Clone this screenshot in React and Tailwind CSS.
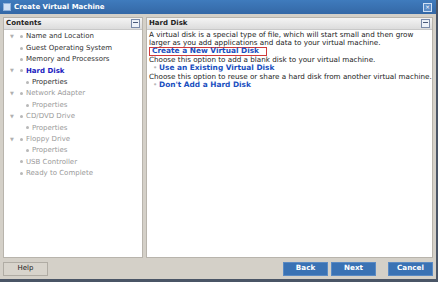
const steps = [
  { label: 'Name and Location', tree: true, state: 'done' },
  { label: 'Guest Operating System', state: 'done' },
  { label: 'Memory and Processors', state: 'done' },
  { label: 'Hard Disk', tree: true, state: 'current' },
  { label: 'Properties', sub: true, state: 'done' },
  { label: 'Network Adapter', tree: true, state: 'todo' },
  { label: 'Properties', sub: true, state: 'todo' },
  { label: 'CD/DVD Drive', tree: true, state: 'todo' },
  { label: 'Properties', sub: true, state: 'todo' },
  { label: 'Floppy Drive', tree: true, state: 'todo' },
  { label: 'Properties', sub: true, state: 'todo' },
  { label: 'USB Controller', state: 'todo' },
  { label: 'Ready to Complete', state: 'todo' },
];

function CollapseIcon() {
  return (
    <div className="w-[9px] h-[9px] border border-[#7a8aa8] bg-[#eef2f8] flex items-start justify-center pt-[2px]">
      <div className="w-[5px] h-px bg-[#4a5a7a]" />
    </div>
  );
}

function PanelHeader({ title }) {
  return (
    <div className="h-[12px] flex items-center justify-between pl-[2px] pr-[2px] bg-gradient-to-b from-[#f4f4f4] to-[#dcdcdc] border-b border-[#c8c8c8]">
      <span className="text-[7px] font-bold text-[#222]">{title}</span>
      <CollapseIcon />
    </div>
  );
}

function Step({ s }) {
  const color =
    s.state === 'current' ? 'text-[#2020c0] font-bold' : s.state === 'done' ? 'text-[#333]' : 'text-[#9a9a9a]';
  return (
    <div className={`h-[11.4px] flex items-center ${s.sub ? 'pl-[22px]' : 'pl-[6px]'}`}>
      {!s.sub && (
        <span className="w-[10px] text-[5px] text-[#b0b0b0] leading-none">{s.tree ? '▼' : ''}</span>
      )}
      <span className="w-[3px] h-[3px] rounded-full bg-[#b8b8b8] mr-[3px]" />
      <span className={`text-[7px] ${color}`}>{s.label}</span>
    </div>
  );
}

function BlueButton({ children, className = '' }) {
  return (
    <div
      className={`h-[14px] flex items-center justify-center bg-[#3a72b4] border border-[#5a8ac4] text-white text-[7.2px] font-bold ${className}`}
    >
      {children}
    </div>
  );
}

function Bullet() {
  return <span className="w-[10px] pl-[4px] text-[#b8b8b8]">•</span>;
}

export default function App() {
  return (
    <div
      className="w-[440px] h-[286px] bg-white relative overflow-hidden"
      style={{ fontFamily: 'Verdana, "DejaVu Sans", sans-serif' }}
    >
      <div className="w-[438px] h-[282px] bg-[#d4d0c8] flex flex-col border-r-[2px] border-b-[3px] border-[#4a5566]">
        {/* title bar */}
        <div className="h-[14px] bg-gradient-to-b from-[#3f7bbd] to-[#3468a6] flex items-center pl-[3px] pr-[4px]">
          <div className="w-[8px] h-[8px] bg-[#cfe0f4] border border-[#8fb2dc] mr-[3px]" />
          <span className="text-[7px] font-bold text-white flex-1">Create Virtual Machine</span>
          <div className="w-[9px] h-[9px] bg-[#5b8cc6] border border-[#cfe0f4] flex items-center justify-center text-white text-[6px] leading-none">
            ×
          </div>
        </div>

        {/* body */}
        <div className="h-[244px] flex gap-[3px] px-[3px] pt-[3px]">
          <div className="w-[140px] bg-white border border-[#b8b4ac] flex flex-col">
            <PanelHeader title="Contents" />
            <div className="pt-[1px]">
              {steps.map((s, i) => (
                <Step key={i} s={s} />
              ))}
            </div>
          </div>

          <div className="flex-1 bg-white border border-[#b8b4ac] flex flex-col">
            <PanelHeader title="Hard Disk" />
            <div className="pl-[2px] pt-[1px] text-[7.2px] text-[#222] leading-[8.3px]">
              <div>A virtual disk is a special type of file, which will start small and then grow</div>
              <div>larger as you add applications and data to your virtual machine.</div>
              <div className="w-[118px] h-[9.5px] -mt-[1px] flex items-center border border-[#d03a3a] pl-[2px] text-[7.4px] font-bold text-[#1a4fc0]">
                Create a New Virtual Disk
              </div>
              <div>Choose this option to add a blank disk to your virtual machine.</div>
              <div className="flex items-center">
                <Bullet />
                <span className="text-[7.4px] font-bold text-[#1a4fc0]">Use an Existing Virtual Disk</span>
              </div>
              <div>Choose this option to reuse or share a hard disk from another virtual machine.</div>
              <div className="flex items-center">
                <Bullet />
                <span className="text-[7.4px] font-bold text-[#1a4fc0]">Don't Add a Hard Disk</span>
              </div>
            </div>
          </div>
        </div>

        {/* footer */}
        <div className="flex-1 flex items-center px-[3px]">
          <div className="w-[45px] h-[14px] flex items-center justify-center bg-[#d8d4cc] border border-[#b0aca4] text-[7px] text-[#222]">
            Help
          </div>
          <div className="flex-1" />
          <BlueButton className="w-[45px]">Back</BlueButton>
          <BlueButton className="w-[45px] ml-[3px]">Next</BlueButton>
          <BlueButton className="w-[45px] ml-[12px]">Cancel</BlueButton>
        </div>
      </div>
    </div>
  );
}
